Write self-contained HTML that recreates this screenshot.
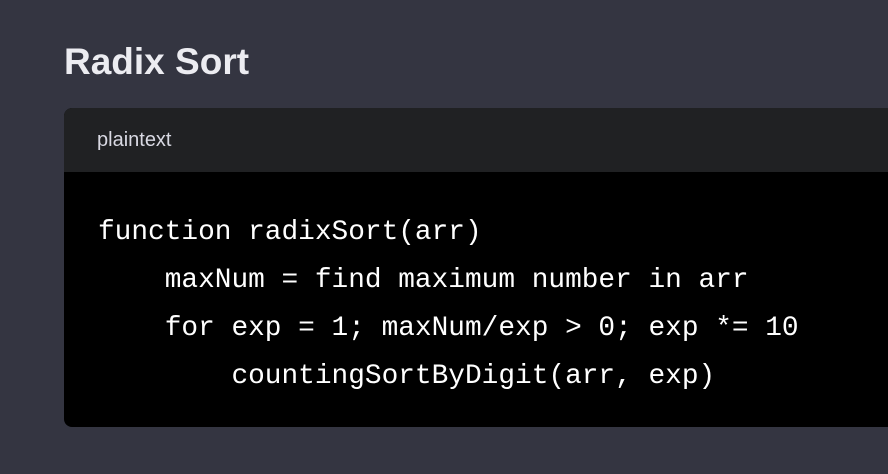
<!DOCTYPE html>
<html><head><style>
html,body{margin:0;padding:0;width:888px;height:474px;overflow:hidden;background:#343541;}
h1{position:absolute;left:64px;top:41px;margin:0;font:bold 37px "Liberation Sans",sans-serif;color:#ececf1;letter-spacing:0px;}
.box{position:absolute;left:64px;top:108px;width:860px;height:319px;border-radius:8px;overflow:hidden;background:#000;}
.hd{height:64px;background:#202123;color:#d9d9e3;font:20px "Liberation Sans",sans-serif;line-height:64px;padding-left:33px;}
pre{margin:0;padding:37px 0 0 34px;font:27.8px/48px "Liberation Mono",monospace;color:#fff;}
</style></head><body>
<h1>Radix Sort</h1>
<div class="box"><div class="hd">plaintext</div>
<pre>function radixSort(arr)
    maxNum = find maximum number in arr
    for exp = 1; maxNum/exp &gt; 0; exp *= 10
        countingSortByDigit(arr, exp)</pre></div>
</body></html>
